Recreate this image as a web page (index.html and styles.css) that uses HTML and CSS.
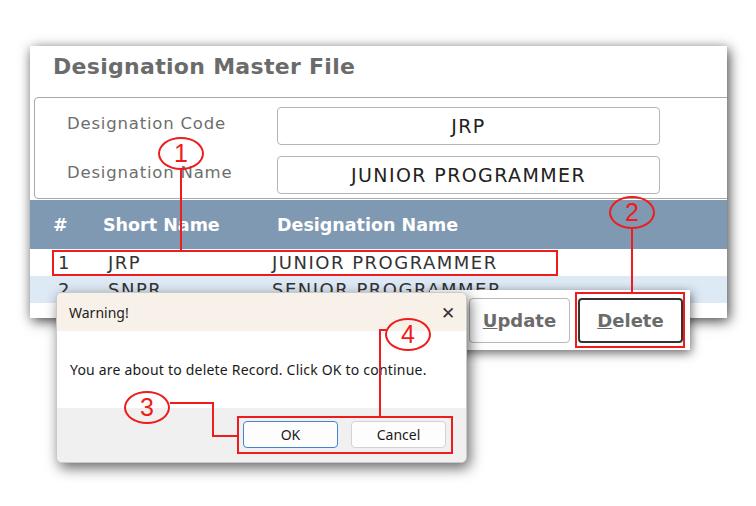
FILE: index.html
```html
<!DOCTYPE html>
<html lang="en">
<head>
  <meta charset="UTF-8">
  <title>Designation Master File – Delete</title>
  <link rel="stylesheet" href="styles.css">
</head>
<body>

  <div class="stage">

    <div class="master">
      <div class="master-title">Designation Master File</div>

      <div class="form-box">
        <div class="form-row">
          <label>Designation Code</label>
          <div class="field">JRP</div>
        </div>
        <div class="form-row">
          <label>Designation Name</label>
          <div class="field">JUNIOR PROGRAMMER</div>
        </div>
      </div>

      <table class="grid">
        <thead>
          <tr>
            <th class="col-no">#</th>
            <th class="col-short">Short Name</th>
            <th>Designation Name</th>
          </tr>
        </thead>
        <tbody>
          <tr>
            <td class="col-no">1</td>
            <td class="col-short">JRP</td>
            <td class="col-name">JUNIOR PROGRAMMER</td>
          </tr>
          <tr class="alt">
            <td class="col-no">2</td>
            <td class="col-short">SNPR</td>
            <td class="col-name">SENIOR PROGRAMMER</td>
          </tr>
        </tbody>
      </table>
    </div>

    <div class="button-strip">
      <button class="act-btn"><u>U</u>pdate</button>
      <button class="act-btn focused"><u>D</u>elete</button>
    </div>

    <div class="dialog">
      <div class="dialog-head">
        <span>Warning!</span>
        <span class="close">&#x2715;</span>
      </div>
      <div class="dialog-body">You are about to delete Record. Click OK to continue.</div>
      <div class="dialog-foot">
        <button class="dlg-btn primary">OK</button>
        <button class="dlg-btn">Cancel</button>
      </div>
    </div>

    <!-- annotations -->
    <div class="mark box-row"></div>
    <div class="mark box-delete"></div>
    <div class="mark box-buttons"></div>

    <div class="bubble b1">1</div>
    <div class="bubble b2">2</div>
    <div class="bubble b3">3</div>
    <div class="bubble b4">4</div>

    <div class="line l1"></div>
    <div class="line l2"></div>
    <div class="line l3a"></div>
    <div class="line l3b"></div>
    <div class="line l3c"></div>
    <div class="line l4a"></div>
    <div class="line l4b"></div>

  </div>

</body>
</html>
```

FILE: styles.css
```css
body {
  margin: 0;
  background: #fff;
  font-family: 'DejaVu Sans', sans-serif;
}

.stage {
  position: relative;
  width: 756px;
  height: 506px;
  overflow: hidden;
  padding-top: 46px;
  box-sizing: border-box;
}

/* main window */
.master {
  margin-left: 30px;
  width: 697px;
  height: 272px;
  background: #fff;
  overflow: hidden;
  box-shadow: 2px 3px 12px rgba(0,0,0,0.75);
}

.master-title {
  height: 51px;
  line-height: 42px;
  padding-left: 23px;
  font-size: 22px;
  font-weight: 700;
  color: #6b6b6b;
  letter-spacing: 0.3px;
}

.form-box {
  margin-left: 4px;
  margin-right: -10px;
  height: 102px;
  border: 1px solid #a9a9a9;
  border-radius: 4px;
  box-sizing: border-box;
  padding-top: 9px;
}

.form-row {
  display: flex;
  align-items: center;
  height: 38px;
  margin-bottom: 11px;
}

.form-row label {
  width: 242px;
  padding-left: 32px;
  box-sizing: border-box;
  font-size: 16.5px;
  letter-spacing: 0.8px;
  color: #6e6e6e;
  margin-top: -6px;
}

.field {
  width: 383px;
  height: 38px;
  border: 1px solid #b5b5b5;
  border-radius: 4px;
  box-sizing: border-box;
  text-align: center;
  line-height: 36px;
  font-size: 19px;
  letter-spacing: 1.4px;
  color: #222;
}

.grid {
  border-collapse: collapse;
  width: 100%;
  margin-top: 1px;
}

.grid th {
  background: #7f99b2;
  color: #fff;
  font-size: 17.5px;
  font-weight: 700;
  text-align: left;
  height: 49px;
  padding: 0;
}

.grid td {
  font-size: 18px;
  letter-spacing: 1.5px;
  color: #333;
  height: 27px;
  padding: 0;
}

.grid th.col-no {
  width: 50px;
  padding-left: 23px;
}

.grid td.col-no {
  width: 45px;
  padding-left: 28px;
}

.grid th.col-short {
  width: 174px;
}

.grid td.col-short {
  width: 169px;
  padding-left: 5px;
}

.grid td.col-name {
  text-indent: -5px;
}

.grid tr.alt td {
  background: #dde9f5;
}

/* action buttons window */
.button-strip {
  position: absolute;
  left: 430px;
  top: 290px;
  width: 260px;
  height: 60px;
  background: #fff;
  box-shadow: 1px 3px 10px rgba(0,0,0,0.6);
  display: flex;
  justify-content: flex-end;
  align-items: center;
  gap: 8px;
  padding-right: 7px;
  box-sizing: border-box;
}

.act-btn {
  width: 101px;
  height: 45px;
  background: #fff;
  border: 1px solid #b8b8b8;
  border-radius: 4px;
  font-family: 'DejaVu Sans', sans-serif;
  font-size: 18px;
  font-weight: 700;
  color: #6b6b6b;
  padding: 0;
}

.act-btn.focused {
  width: 105px;
  border: 2px solid #333;
}

/* warning dialog */
.dialog {
  position: absolute;
  left: 56px;
  top: 292px;
  width: 411px;
  height: 171px;
  border: 1px solid #c9c9c9;
  border-radius: 6px;
  overflow: hidden;
  background: #fff;
  box-shadow: 3px 5px 14px rgba(0,0,0,0.6);
  font-family: 'Noto Sans', sans-serif;
  box-sizing: border-box;
}

.dialog-head {
  height: 38px;
  background: #f8f1e9;
  display: flex;
  justify-content: space-between;
  align-items: center;
  padding: 0 11px 0 12px;
  font-size: 14px;
  color: #222;
}

.close {
  font-size: 17px;
  color: #333;
}

.dialog-body {
  height: 77px;
  padding-left: 13px;
  line-height: 78px;
  font-size: 14px;
  letter-spacing: 0.2px;
  color: #1a1a1a;
}

.dialog-foot {
  height: 56px;
  background: #f0f0f0;
  display: flex;
  justify-content: flex-end;
  align-items: flex-start;
  gap: 13px;
  padding: 13px 20px 0 0;
  box-sizing: border-box;
}

.dlg-btn {
  width: 95px;
  height: 27px;
  background: #fdfdfd;
  border: 1px solid #d3d3d3;
  border-radius: 4px;
  font-family: 'Noto Sans', sans-serif;
  font-size: 14px;
  color: #1a1a1a;
  padding: 0;
}

.dlg-btn.primary {
  border-color: #3c86d4;
}

/* red annotations */
.mark {
  position: absolute;
  border: 2px solid #ee1c1c;
  box-sizing: border-box;
}

.box-row {
  left: 52px;
  top: 250px;
  width: 506px;
  height: 26px;
}

.box-delete {
  left: 575px;
  top: 292px;
  width: 110px;
  height: 56px;
}

.box-buttons {
  left: 237px;
  top: 416px;
  width: 216px;
  height: 38px;
}

.bubble {
  position: absolute;
  width: 46px;
  height: 33px;
  border: 2px solid #ee1c1c;
  border-radius: 50%;
  box-sizing: border-box;
  color: #ee1c1c;
  font-family: 'Liberation Sans', sans-serif;
  font-size: 25px;
  line-height: 29px;
  text-align: center;
}

.b1 { left: 158px; top: 137px; }
.b2 { left: 609px; top: 196px; }
.b3 { left: 124px; top: 391px; }
.b4 { left: 385px; top: 318px; }

.line {
  position: absolute;
  background: #ee1c1c;
}

.l1 { left: 180px; top: 170px; width: 2px; height: 80px; }
.l2 { left: 631px; top: 229px; width: 2px; height: 63px; }
.l3a { left: 170px; top: 402px; width: 44px; height: 2px; }
.l3b { left: 212px; top: 402px; width: 2px; height: 35px; }
.l3c { left: 212px; top: 435px; width: 25px; height: 2px; }
.l4a { left: 379px; top: 329px; width: 7px; height: 2px; }
.l4b { left: 379px; top: 329px; width: 2px; height: 88px; }
```
